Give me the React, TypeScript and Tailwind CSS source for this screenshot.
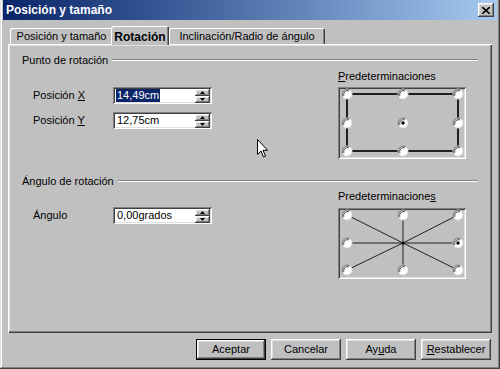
import React from "react";

const raised =
  "shadow-[inset_-1px_-1px_#404040,inset_1px_1px_#ffffff,inset_-2px_-2px_#808080,inset_2px_2px_#dfdfdf]";
const sunken =
  "shadow-[inset_1px_1px_#808080,inset_-1px_-1px_#ffffff,inset_2px_2px_#404040,inset_-2px_-2px_#dfdfdf]";

function Radio({ cx, cy, checked }: { cx: number; cy: number; checked?: boolean }) {
  return (
    <g>
      <circle cx={cx} cy={cy} r={5} fill="#ffffff" stroke="#dfdfdf" strokeWidth={1} />
      <path
        d={`M ${cx - 4.2} ${cy + 2.5} A 5 5 0 0 1 ${cx + 2.5} ${cy - 4.2}`}
        fill="none"
        stroke="#808080"
        strokeWidth={1.2}
      />
      <path
        d={`M ${cx - 3.2} ${cy + 1.8} A 4 4 0 0 1 ${cx + 1.8} ${cy - 3.2}`}
        fill="none"
        stroke="#404040"
        strokeWidth={1}
      />
      {checked && <circle cx={cx} cy={cy} r={1.7} fill="#000" />}
    </g>
  );
}

const xs = [9, 65, 120];

function PresetBox1() {
  const ys = [7, 36, 64];
  return (
    <div className={`w-[128px] h-[72px] ${sunken}`}>
      <svg width={128} height={72} className="block">
        <rect x={9} y={7} width={111} height={57} fill="none" stroke="#202020" strokeWidth={2} />
        {ys.map((y, i) =>
          xs.map((x, j) => <Radio key={`${i}-${j}`} cx={x} cy={y} checked={i === 1 && j === 1} />)
        )}
      </svg>
    </div>
  );
}

function PresetBox2() {
  const ys = [7, 35, 62];
  const c = { x: 65, y: 35 };
  return (
    <div className={`w-[128px] h-[71px] ${sunken}`}>
      <svg width={128} height={71} className="block">
        {ys.map((y) =>
          xs.map((x) =>
            x === c.x && y === c.y ? null : (
              <line key={`l${x}-${y}`} x1={c.x} y1={c.y} x2={x} y2={y} stroke="#202020" strokeWidth={1} />
            )
          )
        )}
        {ys.map((y, i) =>
          xs.map((x, j) =>
            i === 1 && j === 1 ? (
              <circle key="c" cx={x} cy={y} r={1.5} fill="#000" />
            ) : (
              <Radio key={`${i}-${j}`} cx={x} cy={y} checked={i === 1 && j === 2} />
            )
          )
        )}
      </svg>
    </div>
  );
}

function Spin() {
  const half = `w-[15px] h-[7px] bg-[#c0c0c0] ${raised} flex items-center justify-center`;
  return (
    <div className="flex flex-col mr-[2px] gap-0">
      <div className={half}>
        <svg width={5} height={3} className="block">
          <path d="M2.5 0 L5 3 L0 3 Z" fill="#000" />
        </svg>
      </div>
      <div className={half}>
        <svg width={5} height={3} className="block">
          <path d="M0 0 L5 0 L2.5 3 Z" fill="#000" />
        </svg>
      </div>
    </div>
  );
}

function Field({ value, selected }: { value: string; selected?: boolean }) {
  return (
    <div className={`w-[99px] h-[17px] bg-white ${sunken} flex items-center`}>
      <div className="flex-1 pl-[3px] flex items-center">
        <span
          className={`text-[11px] leading-[13px] px-[1px] ${
            selected ? "bg-[#0a246a] text-white" : "text-black"
          }`}
        >
          {value}
        </span>
      </div>
      <Spin />
    </div>
  );
}

function GroupHeader({ label }: { label: string }) {
  return (
    <div className="flex items-center h-[12px] pl-[14px] pr-[14px]">
      <span className="text-[11px] leading-[12px] text-black">{label}</span>
      <div className="flex-1 ml-[4px] border-t border-t-[#808080] border-b border-b-white" />
    </div>
  );
}

function Btn({ children, def }: { children: React.ReactNode; def?: boolean }) {
  return (
    <div
      className={`w-[70px] h-[21px] flex items-center justify-center text-[11px] text-black ${
        def
          ? "shadow-[inset_0_0_0_1px_#000000,inset_-2px_-2px_#404040,inset_2px_2px_#ffffff,inset_-3px_-3px_#808080,inset_3px_3px_#dfdfdf]"
          : raised
      }`}
    >
      {children}
    </div>
  );
}

export default function App() {
  return (
    <div className="w-[500px] h-[369px] bg-[#c0c0c0] relative flex flex-col font-['Liberation_Sans',Arial,sans-serif] shadow-[inset_-1px_-1px_#404040,inset_1px_0_#dfdfdf,inset_-2px_-2px_#808080,inset_2px_0_#ffffff] overflow-hidden">
      {/* Title bar */}
      <div className="mx-[3px] h-[20px] bg-gradient-to-r from-[#0a246a] to-[#a6caf0] flex items-center justify-between pl-[3px] pr-[3px]">
        <span className="text-white font-bold text-[12px] leading-[14px]">Posición y tamaño</span>
        <div className={`w-[16px] h-[14px] bg-[#c0c0c0] ${raised} flex items-center justify-center`}>
          <svg width={8} height={7} className="block">
            <path d="M0 0 L8 7 M8 0 L0 7" stroke="#000" strokeWidth={1.6} />
          </svg>
        </div>
      </div>

      <div className="px-[8px] flex flex-col">
        {/* Tabs */}
        <div className="mt-[6px] h-[18px] flex items-end pl-[2px]">
          <div className="w-[103px] h-[16px] rounded-t-[2px] shadow-[inset_1px_1px_#ffffff,inset_-1px_0_#404040,inset_-2px_0_#808080] flex items-center justify-center text-[11px] text-black">
            Posición y tamaño
          </div>
          <div className="relative z-10 -ml-[2px] -mb-[1px] w-[58px] h-[19px] bg-[#c0c0c0] rounded-t-[2px] shadow-[inset_1px_1px_#ffffff,inset_-1px_0_#404040,inset_-2px_0_#808080] flex items-start pt-[2px] justify-center text-[12px] font-bold text-black">
            Rotación
          </div>
          <div className="w-[156px] h-[16px] rounded-t-[2px] shadow-[inset_1px_1px_#ffffff,inset_-1px_0_#404040,inset_-2px_0_#808080] flex items-center justify-center text-[11px] text-black">
            Inclinación/Radio de ángulo
          </div>
        </div>

        {/* Panel */}
        <div className="h-[289px] shadow-[inset_1px_1px_#ffffff,inset_-1px_-1px_#404040,inset_-2px_-2px_#808080,inset_2px_2px_#dfdfdf] flex flex-col">
          <div className="mt-[10px]">
            <GroupHeader label="Punto de rotación" />
          </div>
          <div className="flex">
            <div className="flex-1 pl-[25px] pt-[21px] flex flex-col gap-[8px]">
              <div className="flex items-center">
                <span className="w-[80px] text-[11px] text-black">
                  Posición <span className="underline">X</span>
                </span>
                <Field value="14,49cm" selected />
              </div>
              <div className="flex items-center">
                <span className="w-[80px] text-[11px] text-black">
                  Posición <span className="underline">Y</span>
                </span>
                <Field value="12,75cm" />
              </div>
            </div>
            <div className="mr-[26px] flex flex-col">
              <div className="mt-[4px] h-[12px] text-[11px] leading-[12px] text-black">
                <span className="underline">P</span>redeterminaciones
              </div>
              <div className="mt-[5px]">
                <PresetBox1 />
              </div>
            </div>
          </div>

          <div className="mt-[16px]">
            <GroupHeader label="Ángulo de rotación" />
          </div>
          <div className="flex">
            <div className="flex-1 pl-[25px] pt-[20px] flex flex-col">
              <div className="flex items-center">
                <span className="w-[80px] text-[11px] text-black">Ángulo</span>
                <Field value="0,00grados" />
              </div>
            </div>
            <div className="mr-[26px] flex flex-col">
              <div className="mt-[3px] h-[12px] text-[11px] leading-[12px] text-black">
                Predeterminacione<span className="underline">s</span>
              </div>
              <div className="mt-[6px]">
                <PresetBox2 />
              </div>
            </div>
          </div>
        </div>

        {/* Buttons */}
        <div className="mt-[6px] flex justify-end gap-[5px] pr-[1px]">
          <Btn def>Aceptar</Btn>
          <Btn>Cancelar</Btn>
          <Btn>
            Ay<span className="underline">u</span>da
          </Btn>
          <Btn>
            <span className="underline">R</span>establecer
          </Btn>
        </div>
      </div>

      {/* Mouse cursor */}
      <svg width={12} height={20} className="absolute left-[257px] top-[139px]">
        <path
          d="M0.5 0.5 L0.5 15.5 L4 12 L6.5 18 L8.5 17.2 L6 11.3 L10.5 11.3 Z"
          fill="#ffffff"
          stroke="#000000"
          strokeWidth={1}
        />
      </svg>
    </div>
  );
}
